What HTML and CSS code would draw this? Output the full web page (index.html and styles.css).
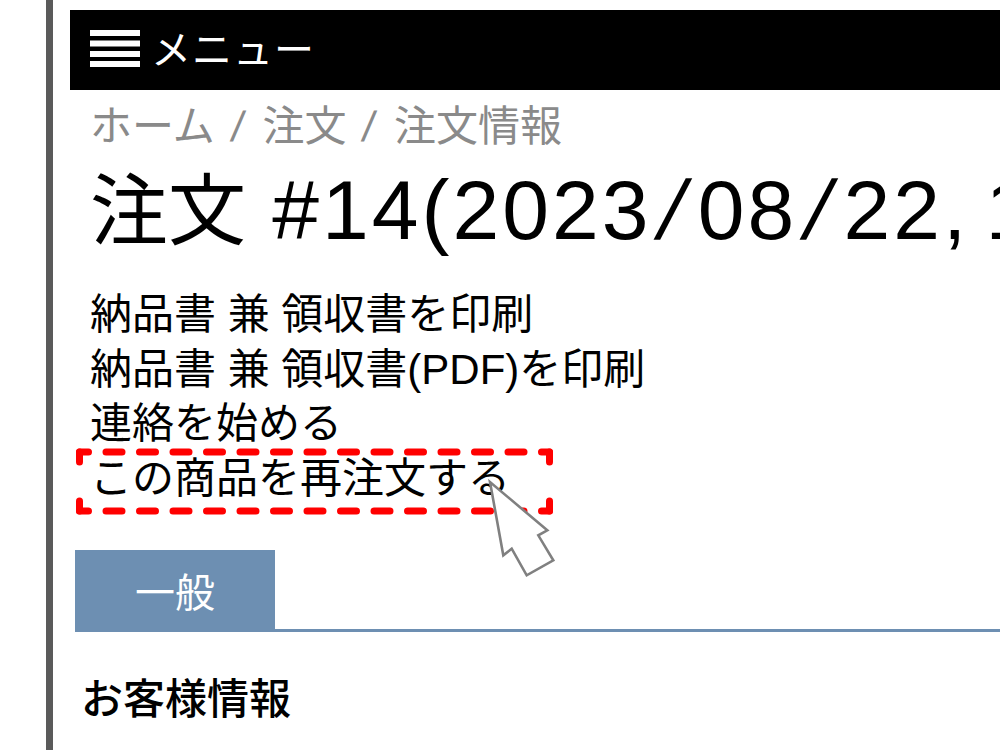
FILE: index.html
```html
<!DOCTYPE html>
<html lang="ja">
<head>
<meta charset="utf-8">
<title>注文情報</title>
<link rel="stylesheet" href="styles.css">
</head>
<body>
<div class="layout">
  <div class="rail"></div>
  <main class="page">
    <header class="menubar">
      <svg class="burger" width="50" height="37" viewBox="0 0 50 37" aria-hidden="true">
        <rect x="0" y="0" width="50" height="6" fill="#fff"/>
        <rect x="0" y="10.5" width="50" height="6" fill="#fff"/>
        <rect x="0" y="21" width="50" height="6" fill="#fff"/>
        <rect x="0" y="31" width="50" height="6" fill="#fff"/>
      </svg>
      <span class="menu-label">メニュー</span>
    </header>
    <nav class="crumbs">ホーム<span class="sep">/</span>注文<span class="sep">/</span>注文情報</nav>
    <h1 class="title"><span class="jp">注文</span> #14(2023<span class="sl">/</span>08<span class="sl">/</span>22<span class="cm">, </span>14:05)</h1>
    <ul class="actions">
      <li><a>納品書 兼 領収書を印刷</a></li>
      <li><a>納品書 兼 領収書(PDF)を印刷</a></li>
      <li><a>連絡を始める</a></li>
      <li class="reorder">
        <a>この商品を再注文する</a>
        <svg class="dashbox" width="477" height="67" viewBox="0 0 477 67" aria-hidden="true">
          <g fill="none" stroke="#ff0000" stroke-width="7" stroke-linecap="round">
            <path d="M3.5 4 H473.5" stroke-dasharray="16 17.5" stroke-dashoffset="7"/>
            <path d="M3.5 63 H473.5" stroke-dasharray="16 17.5" stroke-dashoffset="7"/>
            <path d="M3.5 4 V63" stroke-dasharray="10 39"/>
            <path d="M473.5 4 V63" stroke-dasharray="10 39"/>
          </g>
        </svg>
        <svg class="cursor" width="70" height="100" viewBox="0 0 70 100" aria-hidden="true">
          <polygon points="2,2 15.3,75.3 23.7,68.7 38.7,95.3 65.3,80.3 50.3,55.3 59.3,50.3" fill="#fff" stroke="#808080" stroke-width="2.6" stroke-linejoin="miter"/>
        </svg>
      </li>
    </ul>
    <div class="tabs">
      <div class="tab">一般</div>
    </div>
    <h2 class="section">お客様情報</h2>
  </main>
</div>
</body>
</html>
```

FILE: styles.css
```css
* {
  box-sizing: border-box;
}

html,
body {
  margin: 0;
  height: 100%;
}

body {
  font-family: "Liberation Sans", "Noto Sans CJK JP", sans-serif;
  color: #000;
  background: #fff;
  overflow: hidden;
}

.layout {
  display: flex;
  height: 100%;
  padding-left: 46px;
  gap: 17px;
}

.rail {
  flex: none;
  width: 7px;
  background: #5a5a5a;
}

.page {
  flex: 1;
  min-width: 0;
  padding-top: 10px;
  overflow: hidden;
}

.menubar {
  display: flex;
  align-items: center;
  gap: 11px;
  height: 80px;
  padding-left: 20px;
  background: #000;
  color: #fff;
}

.burger {
  flex: none;
  margin-top: -3px;
}

.menu-label {
  font-size: 40px;
  line-height: 50px;
  letter-spacing: 1px;
}

.crumbs {
  margin-top: 12px;
  padding-left: 20px;
  font-size: 42px;
  line-height: 50px;
  color: #8a8a8a;
  white-space: nowrap;
}

.crumbs .sep {
  display: inline-block;
  margin: 0 19px 0 17px;
  transform: skewX(-9deg);
}

.title {
  margin: 13px 0 0;
  padding-left: 20px;
  font-size: 84px;
  font-weight: normal;
  line-height: 90px;
  letter-spacing: 3px;
  white-space: nowrap;
}

.title .jp {
  font-size: 78px;
  letter-spacing: 0;
}

.title .sl {
  display: inline-block;
  margin: 0 10px;
  transform: skewX(-14deg);
}

.title .cm {
  letter-spacing: -2px;
}

.actions {
  list-style: none;
  margin: 31px 0 0;
  padding: 0 0 0 20px;
  font-size: 42px;
  line-height: 54.5px;
}

.actions li {
  white-space: nowrap;
}

.actions a {
  color: #000;
  text-decoration: none;
}

.reorder {
  position: relative;
}

.dashbox {
  position: absolute;
  left: -14px;
  top: -3.5px;
  overflow: visible;
}

.cursor {
  position: absolute;
  left: 398px;
  top: 28.5px;
  overflow: visible;
}

.tabs {
  display: flex;
  margin: 44px 0 0 5px;
  border-bottom: 3px solid #6d8fb2;
}

.tab {
  display: flex;
  align-items: center;
  justify-content: center;
  width: 200px;
  height: 79px;
  background: #6d8fb2;
  color: #fff;
  font-size: 40px;
}

.section {
  margin: 43px 0 0;
  padding-left: 11px;
  font-size: 42px;
  font-weight: 500;
  line-height: 50px;
}
```
